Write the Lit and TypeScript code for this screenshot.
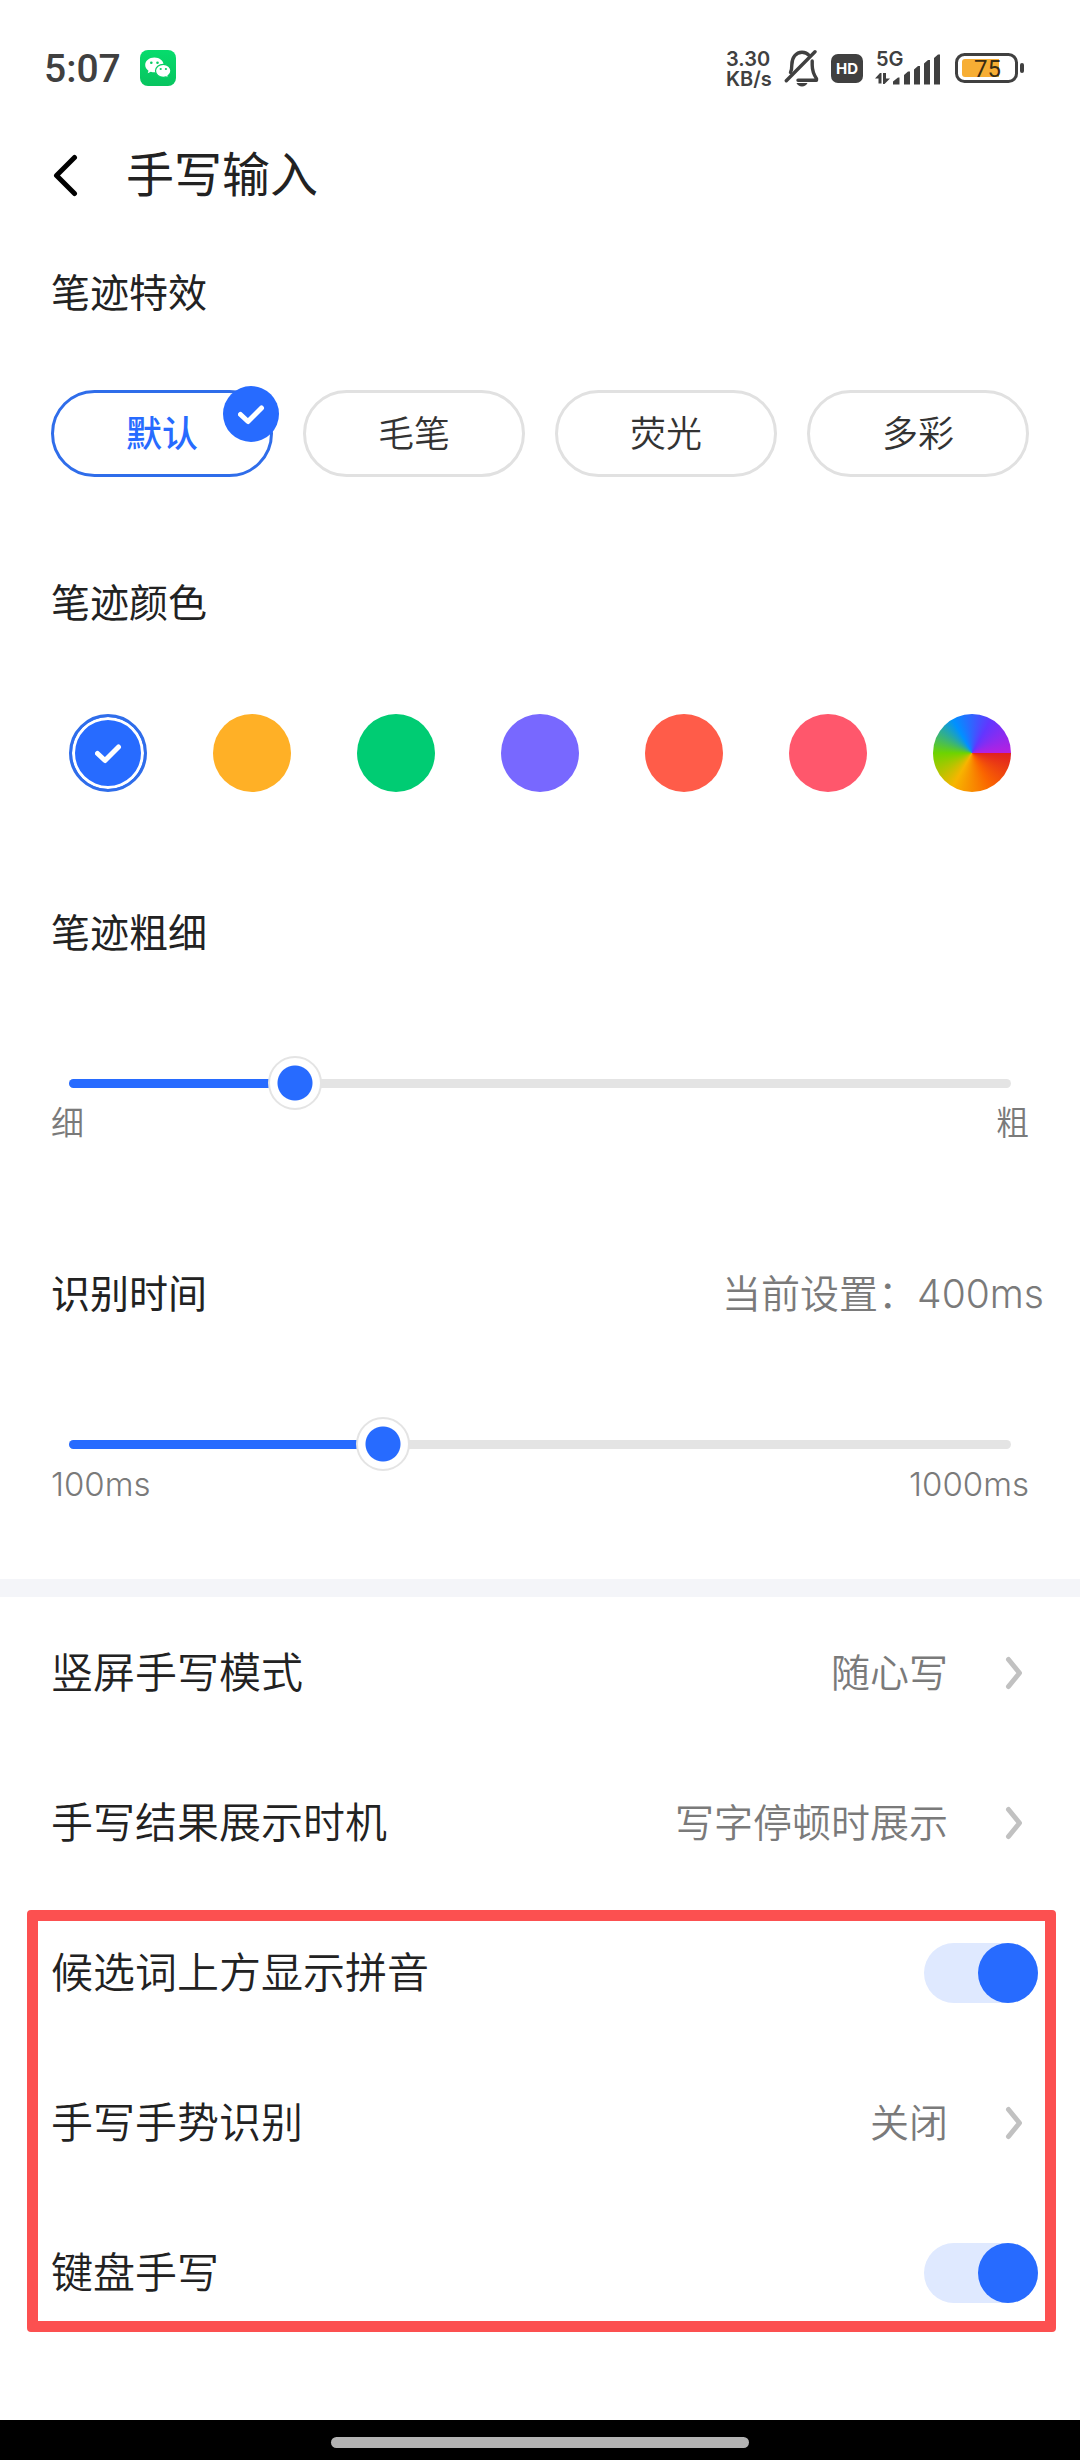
import { LitElement, html, css, svg } from "lit";
import { customElement, state } from "lit/decorators.js";
import { classMap } from "lit/directives/class-map.js";
import { styleMap } from "lit/directives/style-map.js";

const EFFECTS = ["默认", "毛笔", "荧光", "多彩"];

const COLORS = [
  { id: "blue", name: "蓝色" },
  { id: "amber", name: "橙黄" },
  { id: "green", name: "绿色" },
  { id: "purple", name: "紫色" },
  { id: "orange", name: "橘红" },
  { id: "pink", name: "粉红" },
  { id: "rainbow", name: "彩色" },
];

const tick = svg`<path d="M2.5 10.5 10 17.500 23.500 4" fill="none" stroke="#fff" stroke-width="5" stroke-linecap="round" stroke-linejoin="round"/>`;

@customElement("status-bar")
export class StatusBar extends LitElement {
  static styles = css`
    :host {
      display: flex;
      align-items: center;
      justify-content: space-between;
      height: 136px;
      padding: 0 55px 0 44px;
      color: #404040;
      font-family: Roboto, "Noto Sans CJK SC", sans-serif;
    }
    svg { display: block; }
    .side { display: flex; align-items: center; }
    .left { gap: 19px; }
    .time { font-size: 39px; line-height: 42px; font-weight: 500; padding-top: 2px; }
    .rate {
      width: 48px;
      margin-right: 10px;
      padding-top: 2px;
      font: 600 20px/20px Inter, sans-serif;
    }
    .rate span { display: block; }
    .bell { margin-right: 12px; }
    .hd {
      width: 32px;
      height: 29px;
      margin-right: 12px;
      border-radius: 7px;
      background: #404040;
      color: #fff;
      font: 700 15px/29px Inter, sans-serif;
      text-align: center;
    }
    .signal { position: relative; margin-right: 14px; }
    .gen {
      position: absolute;
      left: 1px;
      top: 0;
      font: 600 20px/16px Inter, sans-serif;
    }
    .battery { position: relative; }
    .level {
      position: absolute;
      left: 19px;
      top: 1px;
      font: 400 24px/30px Roboto, sans-serif;
      color: #3a2c12;
    }
  `;

  render() {
    return html`
      <div class="side left">
        <span class="time">5:07</span>
        <svg width="36" height="36" viewBox="0 0 36 36" aria-hidden="true">
          <defs>
            <linearGradient id="g" x1="0" y1="0" x2="0" y2="1">
              <stop offset="0" stop-color="#06dc6c" />
              <stop offset="1" stop-color="#08c45f" />
            </linearGradient>
          </defs>
          <rect width="36" height="36" rx="8" fill="url(#g)" />
          <path d="M14.4 7.6c-5.2 0-9.2 3.3-9.2 7.4 0 2.400 1.300 4.300 3.300 5.700l-.8 2.600 3.100-1.600c1.100.4 2.300.6 3.600.6 5.100 0 9.200-3.300 9.200-7.300s-4.100-7.400-9.200-7.400z" fill="#fff" />
          <path d="M23.300 14.300c-4.300 0-7.800 2.900-7.800 6.500s3.500 6.500 7.800 6.500c1 0 1.900-.1 2.800-.4l2.500 1.400-.7-2.300c1.900-1.200 3-3.100 3-5.200 0-3.600-3.300-6.500-7.600-6.500z" fill="#fff" stroke="#07cd64" stroke-width="1.200" />
          <g fill="#07cd64">
            <circle cx="11.300" cy="12.800" r="1.300" /><circle cx="17.500" cy="12.800" r="1.300" />
            <circle cx="20.700" cy="19" r="1.100" /><circle cx="25.900" cy="19" r="1.100" />
          </g>
        </svg>
      </div>
      <div class="side">
        <div class="rate"><span>3.30</span><span>KB/s</span></div>
        <svg class="bell" width="35" height="38" viewBox="0 0 35 38" aria-hidden="true">
          <g fill="none" stroke="#404040" stroke-width="3.400" stroke-linecap="round" stroke-linejoin="round">
            <path d="M6.500 23.500c1-2 1.300-4 1.300-7.500C7.800 8.500 12 3.200 18 3.200c3 0 5.500 1.200 7.200 3.300" />
            <path d="M28.200 12v4c0 6 1.200 9 4.300 13.600v1.600H14" />
            <path d="M31 2.800 2.300 31.800" />
          </g>
          <path d="M12.500 34h11c-1 2.200-3 3.400-5.500 3.400S13.500 36.200 12.500 34z" fill="#404040" />
        </svg>
        <div class="hd">HD</div>
        <div class="signal">
          <span class="gen">5G</span>
          <svg width="66" height="34" viewBox="0 0 66 34" aria-hidden="true">
            <g fill="#404040">
              <path d="M0 27.500l5-5.500h1.500v10.500h-3v-5zM8 22h3v5.500h4L9.500 33H8z" />
              <path d="M18 33.500v-3l5-4h1.500v7zM29 24l4-3.500h2v13h-6zM39 18.500l4-3.500h2v18.500h-6zM49 12.500l4-3.500h2v24.500h-6zM59 7l4-3.500h2v30h-6z" />
            </g>
          </svg>
        </div>
        <div class="battery">
          <svg width="70" height="30" viewBox="0 0 70 30" aria-hidden="true">
            <rect x="1.500" y="1.500" width="60" height="27" rx="8" fill="#fff" stroke="#404040" stroke-width="3" />
            <path d="M10 6h34v18H10a3 3 0 0 1-3-3V9a3 3 0 0 1 3-3z" fill="#f7ae34" />
            <rect x="65" y="10" width="4" height="10" rx="2" fill="#404040" />
          </svg>
          <span class="level">75</span>
        </div>
      </div>
    `;
  }
}

@customElement("app-root")
export class AppRoot extends LitElement {
  @state() private effect = 0;
  @state() private color = "blue";
  @state() private thickness = 24;
  @state() private delay = 400;

  static styles = css`
    :host {
      display: flex;
      flex-direction: column;
      min-height: 100vh;
      background: #fff;
      color: #222;
      font-family: Inter, "Noto Sans CJK SC", sans-serif;
    }
    * { box-sizing: border-box; }
    h1, h2 { margin: 0; }
    svg { display: block; }
    button {
      margin: 0;
      padding: 0;
      border: 0;
      background: none;
      color: inherit;
      font: inherit;
      text-align: left;
    }

    .header {
      display: flex;
      align-items: center;
      gap: 47px;
      height: 76px;
      padding: 2px 51px 0;
    }
    .title { font-size: 48px; line-height: 74px; font-weight: 400; }

    .section { padding: 0 51px; }
    .effects { padding-top: 52px; }
    .colors { padding-top: 97px; }
    .width { padding-top: 112px; }
    .delay { padding: 129px 51px 82px; }
    .heading { font-size: 39px; line-height: 58px; font-weight: 400; }
    .heading-row { display: flex; justify-content: space-between; margin-right: -15px; }
    .current { font-size: 39px; line-height: 58px; font-weight: 350; color: #7a7a7a; }

    .pills {
      display: grid;
      grid-template-columns: repeat(4, 1fr);
      gap: 30px;
      margin-top: 68px;
    }
    .pill {
      position: relative;
      height: 87px;
      border: 3px solid #e1e1e1;
      border-radius: 44px;
      color: #333;
      font-size: 36px;
      line-height: 80px;
      font-weight: 350;
      text-align: center;
    }
    .pill.on { border-color: #2f6dea; color: #276bff; font-weight: 500; }
    .badge {
      position: absolute;
      top: -7px;
      right: -9px;
      display: grid;
      place-items: center;
      width: 56px;
      height: 56px;
      border-radius: 50%;
      background: #276bff;
    }

    .dots {
      display: flex;
      justify-content: space-between;
      margin-top: 82px;
      padding: 0 18px;
    }
    .dot {
      display: grid;
      place-items: center;
      width: 78px;
      height: 78px;
      border-radius: 50%;
    }
    .dot.on { border: 3px solid #2f6dea; box-shadow: inset 0 0 0 3px #fff; }
    .blue { background: #276bff; }
    .amber { background: #ffb026; }
    .green { background: #00cc73; }
    .purple { background: #7868ff; }
    .orange { background: #ff5c49; }
    .pink { background: #ff576c; }
    .rainbow {
      background: conic-gradient(from 90deg, #e02020, #fa6400, #f7b500, #6dd400, #0091ff, #6236ff, #b620e0);
    }

    .slider {
      display: grid;
      align-items: center;
      margin: 94px -9px 0;
    }
    .rail, .range { grid-area: 1 / 1; }
    .rail {
      height: 9px;
      margin: 0 27px;
      border-radius: 5px;
      background: #e4e4e4;
      overflow: hidden;
    }
    .fill { height: 100%; background: #276bff; }
    .range {
      appearance: none;
      width: 100%;
      height: 54px;
      margin: 0;
      background: none;
    }
    .range::-webkit-slider-thumb {
      appearance: none;
      width: 54px;
      height: 54px;
      border: 2px solid #e4e4e4;
      border-radius: 50%;
      background: radial-gradient(circle, #276bff 17px, #fff 18px);
    }
    .ends {
      display: flex;
      justify-content: space-between;
      font-size: 33px;
      line-height: 26px;
      font-weight: 350;
      color: #7a7a7a;
    }

    .divider { height: 18px; background: #f4f5f9; }

    .row {
      display: flex;
      align-items: center;
      width: 100%;
      height: 150px;
      padding: 2px 57px 0 51px;
      font-size: 42px;
      line-height: 60px;
      font-weight: 350;
    }
    .row.toggle { padding-right: 42px; }
    .name { flex: 1; }
    .value { margin-right: 57px; font-size: 39px; color: #7a7a7a; }
    .switch {
      appearance: none;
      display: flex;
      justify-content: flex-start;
      width: 114px;
      height: 60px;
      margin: 0;
      border-radius: 30px;
      background: #e4e4e4;
    }
    .switch::before {
      content: "";
      width: 60px;
      height: 60px;
      border-radius: 50%;
      background: #fff;
    }
    .switch:checked { justify-content: flex-end; background: #dfe9ff; }
    .switch:checked::before { background: #276bff; }

    .group { position: relative; }
    .frame {
      position: absolute;
      inset: 13px 24px 15px 27px;
      border: 11px solid #fc5050;
      border-radius: 4px;
      pointer-events: none;
    }

    .nav {
      display: flex;
      justify-content: center;
      align-items: center;
      height: 40px;
      margin-top: auto;
      padding-top: 4px;
      background: #000;
    }
    .handle { width: 418px; height: 11px; border-radius: 6px; background: #b3b3b3; }
  `;

  private link(name: string, value: string) {
    return html`
      <button class="row">
        <span class="name">${name}</span>
        <span class="value">${value}</span>
        <svg width="18" height="34" viewBox="0 0 18 34" aria-hidden="true">
          <path d="M3.500 3.500 14.500 17 3.500 30.500" fill="none" stroke="#c1c1c1" stroke-width="5" stroke-linecap="round" stroke-linejoin="round" />
        </svg>
      </button>
    `;
  }

  private toggle(name: string) {
    return html`
      <label class="row toggle">
        <span class="name">${name}</span>
        <input class="switch" type="checkbox" role="switch" checked />
      </label>
    `;
  }

  private slider(label: string, min: number, max: number, value: number, set: (v: number) => void) {
    const percent = ((value - min) / (max - min)) * 100;
    return html`
      <div class="slider">
        <div class="rail"><div class="fill" style=${styleMap({ width: `${percent}%` })}></div></div>
        <input
          class="range"
          type="range"
          aria-label=${label}
          min=${min}
          max=${max}
          .value=${String(value)}
          @input=${(e: Event) => set(Number((e.target as HTMLInputElement).value))}
        />
      </div>
    `;
  }

  render() {
    return html`
      <status-bar></status-bar>
      <header class="header">
        <button aria-label="返回">
          <svg width="28" height="44" viewBox="0 0 28 44" aria-hidden="true">
            <path d="M23.500 4.500 5.500 22.500 23.500 40.500" fill="none" stroke="#000" stroke-width="5" stroke-linecap="round" stroke-linejoin="round" />
          </svg>
        </button>
        <h1 class="title">手写输入</h1>
      </header>

      <section class="section effects">
        <h2 class="heading">笔迹特效</h2>
        <div class="pills">
          ${EFFECTS.map(
            (name, i) => html`
              <button
                class=${classMap({ pill: true, on: i === this.effect })}
                aria-pressed=${i === this.effect}
                @click=${() => (this.effect = i)}
              >
                ${name}
                ${i === this.effect
                  ? html`<span class="badge"><svg width="27" height="21" viewBox="0 0 27 21">${tick}</svg></span>`
                  : ""}
              </button>
            `
          )}
        </div>
      </section>

      <section class="section colors">
        <h2 class="heading">笔迹颜色</h2>
        <div class="dots">
          ${COLORS.map(
            ({ id, name }) => html`
              <button
                class=${classMap({ dot: true, [id]: true, on: id === this.color })}
                aria-label=${name}
                aria-pressed=${id === this.color}
                @click=${() => (this.color = id)}
              >
                ${id === this.color ? html`<svg width="27" height="21" viewBox="0 0 27 21">${tick}</svg>` : ""}
              </button>
            `
          )}
        </div>
      </section>

      <section class="section width">
        <h2 class="heading">笔迹粗细</h2>
        ${this.slider("笔迹粗细", 0, 100, this.thickness, (v) => (this.thickness = v))}
        <div class="ends"><span>细</span><span>粗</span></div>
      </section>

      <section class="section delay">
        <div class="heading-row">
          <h2 class="heading">识别时间</h2>
          <span class="current">当前设置：${this.delay}ms</span>
        </div>
        ${this.slider("识别时间", 100, 1000, this.delay, (v) => (this.delay = v))}
        <div class="ends"><span>100ms</span><span>1000ms</span></div>
      </section>

      <div class="divider"></div>

      ${this.link("竖屏手写模式", "随心写")}
      ${this.link("手写结果展示时机", "写字停顿时展示")}
      <div class="group">
        ${this.toggle("候选词上方显示拼音")}
        ${this.link("手写手势识别", "关闭")}
        ${this.toggle("键盘手写")}
        <div class="frame"></div>
      </div>

      <div class="nav"><div class="handle"></div></div>
    `;
  }
}
